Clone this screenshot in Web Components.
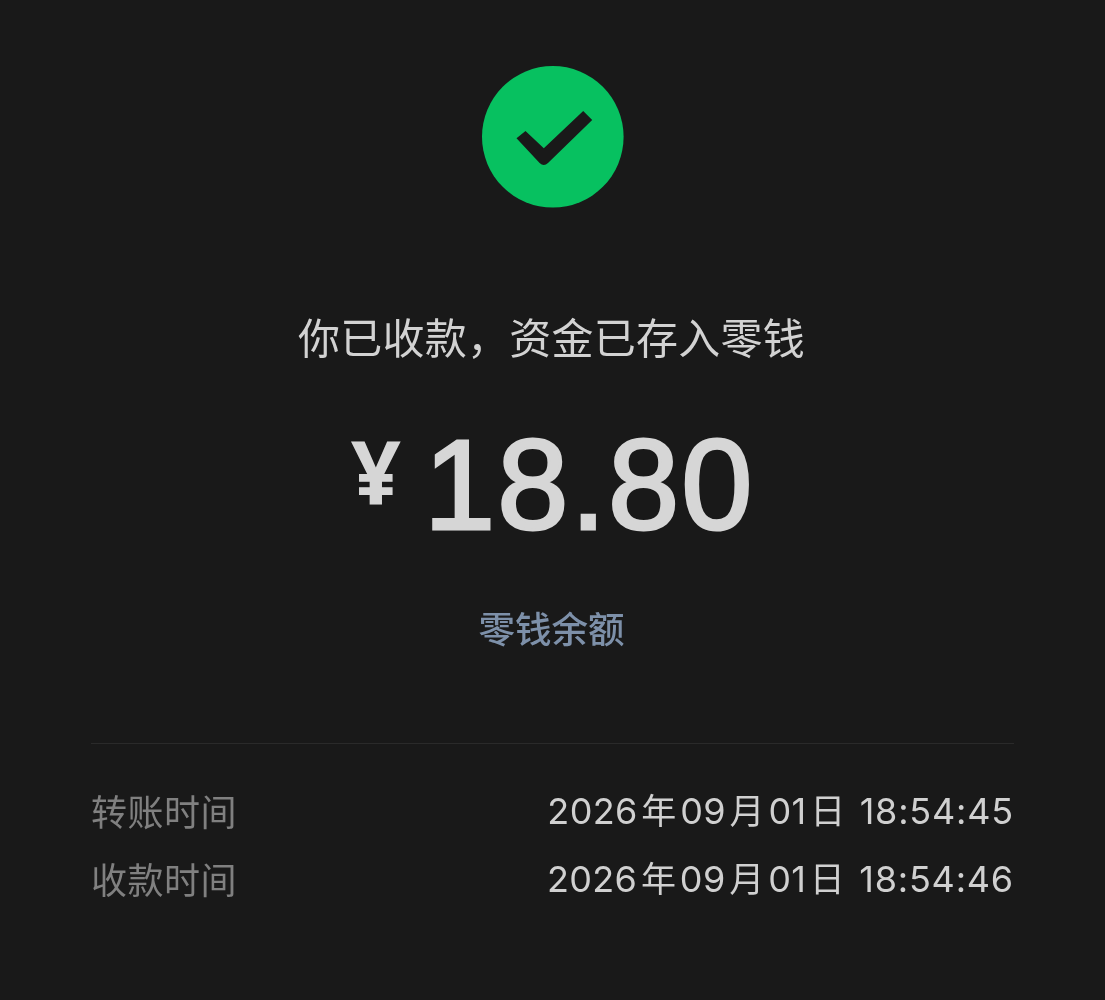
<!DOCTYPE html>
<html lang="zh-CN">
<head>
  <meta charset="UTF-8">
  <title>收款</title>
  <style>
    html, body { margin: 0; background: #191919; }
    body { font-family: Inter, "Noto Sans CJK SC", sans-serif; }
  </style>
</head>
<body>
  <receipt-page>
    <status-icon></status-icon>
    <receipt-title>你已收款，资金已存入零钱</receipt-title>
    <receipt-amount value="18.80"></receipt-amount>
    <receipt-link>零钱余额</receipt-link>
    <receipt-details>
      <receipt-row label="转账时间">2026<i>年</i>09<i>月</i>01<i>日</i> <b>18:54:45</b></receipt-row>
      <receipt-row label="收款时间">2026<i>年</i>09<i>月</i>01<i>日</i> <b>18:54:46</b></receipt-row>
    </receipt-details>
  </receipt-page>

  <script>
    function define(name, html) {
      customElements.define(name, class extends HTMLElement {
        constructor() {
          super();
          this.attachShadow({ mode: 'open' }).innerHTML = typeof html === 'function' ? html(this) : html;
        }
      });
    }

    define('receipt-page', `
      <style>
        :host { display: flex; flex-direction: column; align-items: center; height: 1000px; box-sizing: border-box; padding-top: 66px; will-change: opacity; }
      </style>
      <slot></slot>
    `);

    define('status-icon', `
      <style>
        :host { display: block; width: 142px; height: 142px; }
        svg { display: block; }
      </style>
      <svg width="142" height="142" viewBox="0 0 142 142">
        <circle cx="70.800" cy="70.800" r="70.800" fill="#07c160"/>
        <path d="M34.500 72.300 L43.500 65 L61.800 82.300 L101.200 45 L110.200 54 L66 97 Q61.800 101 57.600 97 Z" fill="#191919"/>
      </svg>
    `);

    define('receipt-title', `
      <style>
        :host { display: block; margin: 100px 2px 0 0; font: 400 42px/56px "Noto Sans CJK SC", sans-serif; letter-spacing: .25px; color: #d2d2d2; white-space: nowrap; }
      </style>
      <slot></slot>
    `);

    define('receipt-amount', el => `
      <style>
        :host { display: flex; align-items: flex-start; gap: 23px; margin-top: 51px; color: #d6d6d6; height: 140px; font-family: "Liberation Sans", sans-serif; }
        .sym { font: 700 88px/112px "Noto Sans", sans-serif; }
        .val { font-size: 128px; line-height: 140px; letter-spacing: 2px; -webkit-text-stroke: 3px #d6d6d6; }
      </style>
      <span class="sym">¥</span><span class="val">${el.getAttribute('value')}</span>
    `);

    define('receipt-link', `
      <style>
        :host { display: block; margin: 48px 2px 0 0; font: 500 36.500px/50px "Noto Sans CJK SC", sans-serif; color: #7d90a9; }
      </style>
      <slot></slot>
    `);

    define('receipt-details', `
      <style>
        :host { display: flex; flex-direction: column; gap: 15px; align-self: stretch; margin: 90px 91px 0; padding-top: 39px; border-top: 1px solid #2a2a2a; }
      </style>
      <slot></slot>
    `);

    define('receipt-row', el => `
      <style>
        :host { display: flex; justify-content: space-between; align-items: center; font: 400 36px/50px Inter, "Noto Sans CJK SC", sans-serif; }
        .label { color: #808080; font-family: "Noto Sans CJK SC", sans-serif; letter-spacing: .5px; }
        .value { color: #d0d0d0; letter-spacing: .35px; padding-top: 3px; }
        ::slotted(i) { font-style: normal; margin: 0 3.600px; font-size: 35px; }
        ::slotted(b) { font-weight: 400; letter-spacing: .8px; }
      </style>
      <span class="label">${el.getAttribute('label')}</span>
      <span class="value"><slot></slot></span>
    `);
  </script>
</body>
</html>
